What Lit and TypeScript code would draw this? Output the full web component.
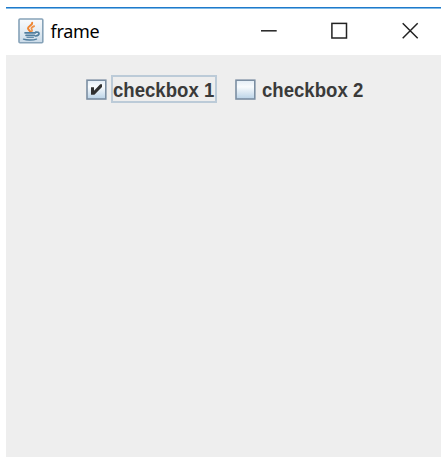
import { LitElement, html, css, svg } from "lit";
import { customElement, property } from "lit/decorators.js";

@customElement("check-item")
class CheckItem extends LitElement {
  @property() label = "";
  @property({ type: Boolean }) checked = false;
  @property({ type: Boolean }) focused = false;

  static styles = css`
    :host { display: flex; align-items: center; height: 28px; }
    .box { display: block; width: 21px; height: 21px; flex: none; }
    .label {
      box-sizing: border-box;
      height: 28px;
      width: 106px;
      margin-left: 4px;
      border: 2px solid transparent;
      font: bold 19.5px/26px "Liberation Sans", Arial, sans-serif;
      color: #3a3a3a;
      white-space: nowrap;
    }
    .focused { border-color: #bccbd8; }
    .text { display: block; width: max-content; transform: scaleX(0.953); transform-origin: 0 0; }
  `;

  render() {
    return html`
      <svg class="box" viewBox="0 0 21 21">
        <defs>
          <linearGradient id="g" x1="0" y1="0" x2="0" y2="1">
            <stop offset="0" stop-color="#e3edf6" />
            <stop offset=".35" stop-color="#f8fbfd" />
            <stop offset="1" stop-color="#b9d2e7" />
          </linearGradient>
        </defs>
        <rect x="1" y="1.2" width="18.8" height="18.8" fill="url(#g)" stroke="#7b8ea2" stroke-width="1.6" />
        ${this.checked
          ? svg`<path d="M5 8.3h3v3.4L14.2 5.2h1.8v2.9L8.4 15.8H5Z" fill="#303030" />`
          : null}
      </svg>
      <span class="label ${this.focused ? "focused" : ""}"><span class="text">${this.label}</span></span>
    `;
  }
}

@customElement("app-root")
class AppRoot extends LitElement {
  static styles = css`
    :host { display: block; box-sizing: border-box; width: 448px; height: 463px; padding: 7px 7px 6px 6px; background: #fff; }
    .window { height: 450px; display: flex; flex-direction: column; background: #eee; }
    .bar {
      box-sizing: border-box;
      height: 48px;
      display: flex;
      align-items: center;
      padding: 0 22px 0 12px;
      background: #fff;
      border-top: 1px solid #1f7acb;
      box-shadow: inset 0 1px #7fb9e6;
    }
    .icon { width: 26px; height: 26px; flex: none; margin-bottom: 1px; }
    .title { flex: 1; margin: 0 0 2px 6.5px; font: 18px/24px "Noto Sans", sans-serif; letter-spacing: -0.3px; color: #000; }
    .buttons { display: flex; gap: 54px; }
    .button { width: 17px; height: 17px; display: block; overflow: visible; }
    .content { display: flex; padding: 20px 0 0 80px; gap: 18px; }
  `;

  render() {
    return html`
      <div class="window">
        <div class="bar">
          <svg class="icon" viewBox="0 0 26 26">
            <defs>
              <linearGradient id="tile" x1="0" y1="0" x2="0" y2="1">
                <stop offset="0" stop-color="#f8fafc" />
                <stop offset=".5" stop-color="#e4edf4" />
                <stop offset="1" stop-color="#c9dae8" />
              </linearGradient>
            </defs>
            <rect x="1" y="1" width="23.8" height="23.8" rx="1" fill="url(#tile)" stroke="#86a2b8" stroke-width="1.6" />
            <g fill="none" stroke-linecap="round">
              <path d="M14.2 4.8c.4 2.3-4.2 3.3-4.2 5.4 0 1.4 1.8 2.2 2.2 3.4" stroke="#ee8430" stroke-width="2" />
              <path d="M16.2 8.1c-2 .8-3.1 1.5-2.8 2.6.4.9 1.3 1.6.3 2.8" stroke="#f0944a" stroke-width="1.7" />
              <path d="M7 14.9h10.4M8 17.4h8.4" stroke="#527f9f" stroke-width="1.6" />
              <path d="M9 19.4h6.4" stroke="#6a91ae" stroke-width="1.1" />
              <path d="M5.5 21.2c3 1.1 9.8 1.1 13-.1" stroke="#527f9f" stroke-width="1.4" />
              <path d="M17.8 14.2c4-.8 4.6 2.8-.3 3.8" stroke="#527f9f" stroke-width="1.7" />
            </g>
          </svg>
          <span class="title">frame</span>
          <div class="buttons">
            <svg class="button" viewBox="0 0 17 17"><path d="M1 7.8h15.7" stroke="#222" stroke-width="1.5" /></svg>
            <svg class="button" viewBox="0 0 17 17"><rect x=".9" y=".4" width="14.6" height="14.6" fill="none" stroke="#222" stroke-width="1.5" /></svg>
            <svg class="button" viewBox="0 0 17 17"><path d="M.7.2l15 15M15.7.2l-15 15" stroke="#222" stroke-width="1.5" /></svg>
          </div>
        </div>
        <div class="content">
          <check-item label="checkbox 1" checked focused></check-item>
          <check-item label="checkbox 2"></check-item>
        </div>
      </div>
    `;
  }
}
